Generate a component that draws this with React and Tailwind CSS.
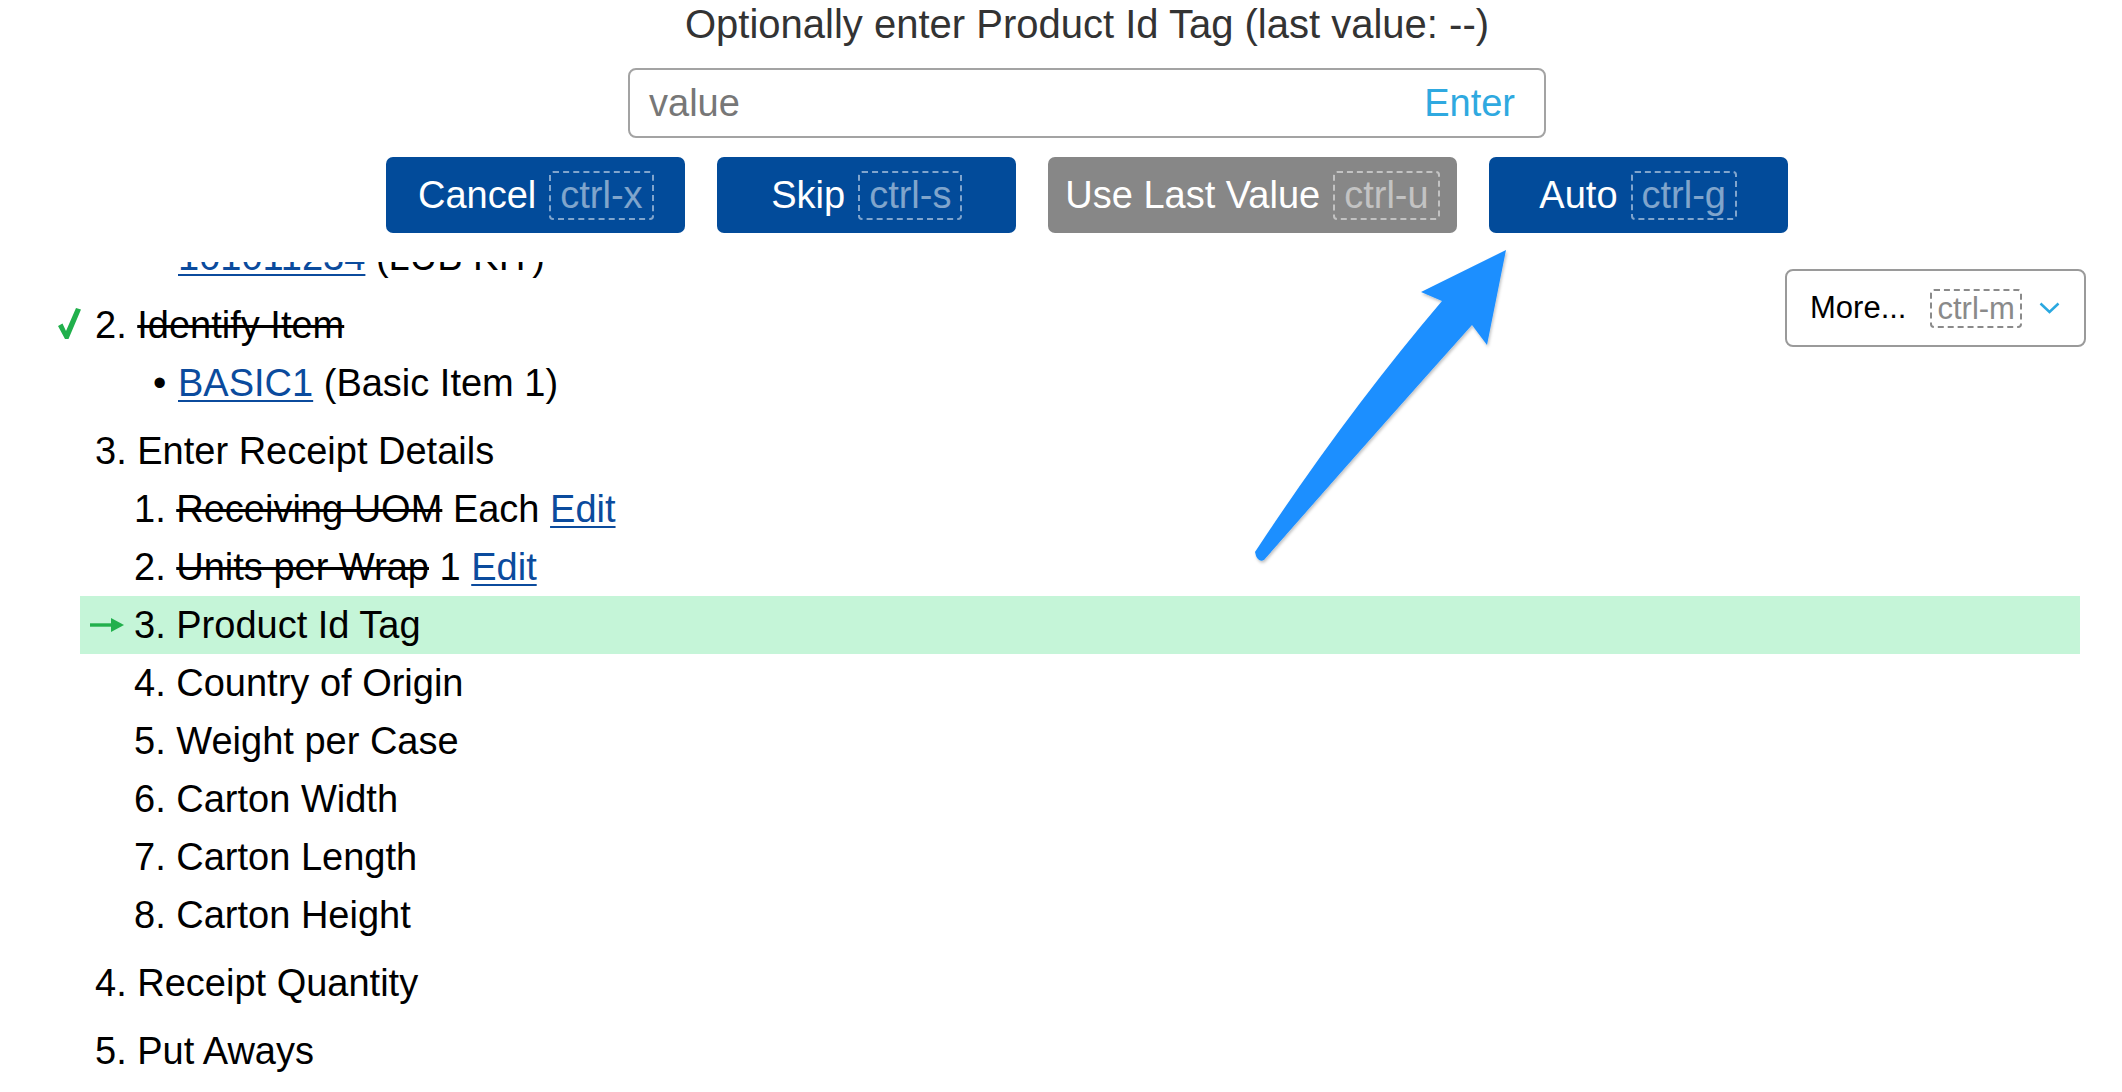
import React from 'react';

const FONT = "font-['Liberation_Sans',Arial,Helvetica,sans-serif]";

function ActionButton({ label, kbd, gray }) {
  return (
    <button
      className={`min-w-[299px] h-[76px] px-[17px] rounded-[7px] flex items-center justify-center gap-[13px] text-white text-[38px] ${
        gray ? 'bg-[#878787]' : 'bg-[#024b9a]'
      }`}
    >
      <span>{label}</span>
      <span className="inline-flex h-[49px] items-center px-[9px] border-2 border-dashed border-white/50 text-white/50 rounded-[4px] leading-[45px]">
        {kbd}
      </span>
    </button>
  );
}

function Check() {
  return (
    <svg width="23" height="31" viewBox="0 0 23 31" className="mt-[-4px]">
      <polygon points="0,18 4.5,15.5 8,23 18,0 23,1.5 10.5,31 7,31" fill="#21b04c" />
    </svg>
  );
}

function Arrow() {
  return (
    <svg width="34" height="14" viewBox="0 0 34 14">
      <rect x="0" y="5.3" width="24" height="3.4" fill="#21b04c" />
      <polygon points="21,0 34,7 21,14" fill="#21b04c" />
    </svg>
  );
}

function Link({ children }) {
  return <a className="text-[#0b4b9d] underline underline-offset-[4px] decoration-[2px]">{children}</a>;
}

function TopRow({ mark, children }) {
  return (
    <div className="flex h-[58px] items-center pl-[58px]">
      <span className="w-[37px] flex items-center">{mark}</span>
      <span className="whitespace-pre">{children}</span>
    </div>
  );
}

function BulletRow({ children }) {
  return (
    <div className="flex h-[58px] items-center pl-[153px]">
      <span className="w-[25px]">•</span>
      <span className="whitespace-pre">{children}</span>
    </div>
  );
}

function SubRow({ active, children }) {
  return (
    <div
      className={`flex h-[58px] items-center ml-[80px] mr-[42px] pl-[10px] ${
        active ? 'bg-[#c5f5d8]' : ''
      }`}
    >
      <span className="w-[44px] flex items-center">{active && <Arrow />}</span>
      <span className="whitespace-pre">{children}</span>
    </div>
  );
}

const steps = [
  'Country of Origin',
  'Weight per Case',
  'Carton Width',
  'Carton Length',
  'Carton Height',
];

export default function App() {
  return (
    <div className={`relative h-screen w-full overflow-hidden bg-white flex flex-col ${FONT}`}>
      {/* Prompt header */}
      <div className="h-[262px] shrink-0 bg-white flex flex-col items-center pl-[52px]">
        <h1 className="text-[40px] leading-[48px] text-[#333]">
          Optionally enter Product Id Tag (last value: --)
        </h1>
        <div className="mt-[20px] w-[918px] h-[70px] border-2 border-[#a3a3a3] rounded-[8px] flex items-center justify-between pl-[19px] pr-[29px] text-[38px]">
          <span className="text-[#777]">value</span>
          <span className="text-[#2fa9e0]">Enter</span>
        </div>
        <div className="mt-[19px] flex gap-[32px]">
          <ActionButton label="Cancel" kbd="ctrl-x" />
          <ActionButton label="Skip" kbd="ctrl-s" />
          <ActionButton label="Use Last Value" kbd="ctrl-u" gray />
          <ActionButton label="Auto" kbd="ctrl-g" />
        </div>
      </div>

      {/* Steps list, scrolled under the header */}
      <div className="flex-1 overflow-hidden text-[38px] text-black">
        <div className="-mt-[34px]">
          <div className="float-right mt-[41px] mr-[36px] w-[301px] h-[78px] border-2 border-[#9a9a9a] rounded-[8px] flex items-center pl-[23px] text-[31px]">
            <span>More...</span>
            <span className="ml-[24px] inline-flex h-[39px] items-center px-[5px] border-2 border-dashed border-[#8a8a8a] text-[#8a8a8a] rounded-[4px] leading-[35px]">
              ctrl-m
            </span>
            <svg width="21" height="12" viewBox="0 0 21 12" className="ml-[17px]">
              <polyline points="1.5,1.5 10.5,10 19.5,1.5" fill="none" stroke="#2aa8e0" strokeWidth="2.5" />
            </svg>
          </div>

          <BulletRow>
            <Link>101011234</Link> (LUB KIT)
          </BulletRow>

          <div className="mt-[10px]">
            <TopRow mark={<Check />}>
              2. <span className="line-through">Identify Item</span>
            </TopRow>
            <BulletRow>
              <Link>BASIC1</Link> (Basic Item 1)
            </BulletRow>
          </div>

          <div className="mt-[10px]">
            <TopRow>3. Enter Receipt Details</TopRow>
            <SubRow>
              1. <span className="line-through">Receiving UOM</span> Each <Link>Edit</Link>
            </SubRow>
            <SubRow>
              2. <span className="line-through">Units per Wrap</span> 1 <Link>Edit</Link>
            </SubRow>
            <SubRow active>3. Product Id Tag</SubRow>
            {steps.map((s, i) => (
              <SubRow key={s}>
                {i + 4}. {s}
              </SubRow>
            ))}
          </div>

          <div className="mt-[10px]">
            <TopRow>4. Receipt Quantity</TopRow>
          </div>
          <div className="mt-[10px]">
            <TopRow>5. Put Aways</TopRow>
          </div>
        </div>
      </div>

      {/* Annotation arrow */}
      <svg
        className="absolute left-0 top-0 pointer-events-none"
        width="2122"
        height="1092"
        viewBox="0 0 2122 1092"
      >
        <defs>
          <filter id="sh" x="-20%" y="-20%" width="140%" height="140%">
            <feDropShadow dx="1" dy="2" stdDeviation="1.5" floodColor="#000" floodOpacity="0.25" />
          </filter>
        </defs>
        <path
          d="M1255,552 Q1345,415 1442,301 L1421,292 L1506,250 L1487,345 L1472,325 Q1362,448 1264,560 Q1257,563 1255,552 Z"
          fill="#1e8fff"
          filter="url(#sh)"
        />
      </svg>
    </div>
  );
}
